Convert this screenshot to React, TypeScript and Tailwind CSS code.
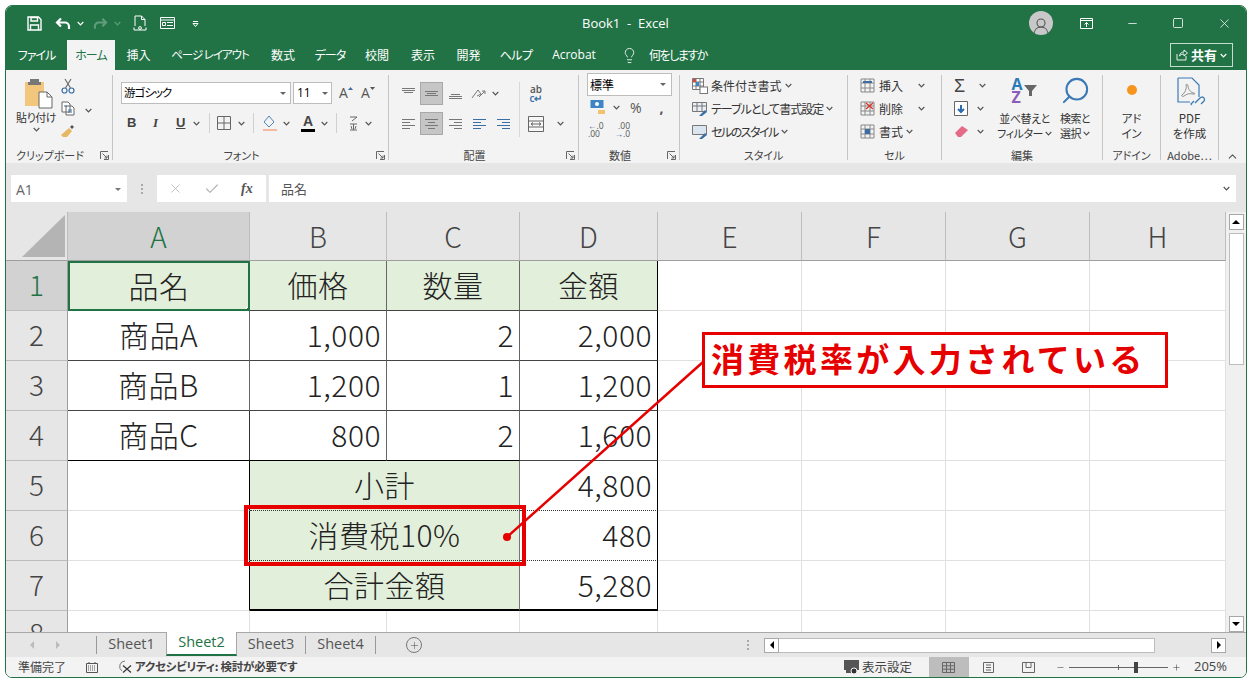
import type { ReactNode } from "react";
import { ChevronUp, Lightbulb, Search, X, Check, Minus, Plus, Square } from "lucide-react";

// small dropdown caret used all over the ribbon
function Chev({ className = "" }: { className?: string }) {
  return (
    <svg width="7" height="5" viewBox="0 0 7 5" className={`shrink-0 ${className}`}>
      <path d="M.7 1 3.5 3.8 6.3 1" fill="none" stroke="#555" strokeWidth="1.2" />
    </svg>
  );
}

function Launcher() {
  return (
    <svg width="9" height="9" viewBox="0 0 9 9" className="shrink-0">
      <path d="M.5 8V.5H8M8.5 4v4.5H4M2.5 2.5 7 7M7 4.5V7H4.5" fill="none" stroke="#666" strokeWidth="1" />
    </svg>
  );
}

function Lines({ kind, color = "#777" }: { kind: "top" | "mid" | "bot" | "left" | "center" | "right"; color?: string }) {
  const paths = {
    top: "M1 2.5h13M1 4.5h13M3 6.500h9",
    mid: "M1 5.500h13M3 7.500h9M1 9.500h13",
    bot: "M3 8.500h9M1 10.500h13M1 12.500h13",
    left: "M1 3.500h13M1 6.500h8M1 9.500h13M1 12.500h8",
    center: "M1 3.500h13M4 6.500h7M1 9.500h13M4 12.500h7",
    right: "M1 3.500h13M6 6.500h8M1 9.500h13M6 12.500h8",
  };
  return (
    <svg width="15" height="15" viewBox="0 0 15 15">
      <path d={paths[kind]} stroke={color} strokeWidth="1" fill="none" />
    </svg>
  );
}

function Group({ className, label, launcher, children }: { className: string; label: string; launcher?: boolean; children: ReactNode }) {
  return (
    <div className={`relative flex h-[85px] shrink-0 flex-col border-r border-[#c6c6c6] ${className}`}>
      <div className="h-[71px] shrink-0">{children}</div>
      <div className={`flex h-[18px] shrink-0 items-center justify-center text-[11px] text-[#444] ${launcher ? "pr-[18px]" : ""}`}>{label}</div>
      {launcher && (
        <div className="absolute right-[3px] bottom-0 flex">
          <Launcher />
        </div>
      )}
    </div>
  );
}

function TitleBar() {
  return (
    <div className="flex h-[34px] shrink-0 items-center bg-[#217346] text-white">
      <div className="flex w-[576px] shrink-0 items-center pl-[21px]">
        <svg width="15" height="15" viewBox="0 0 15 15">
          <path d="M1 1h10.5L14 3.5V14H1Z" fill="none" stroke="#fff" strokeWidth="1.4" />
          <path d="M4 1.5h6.5v3.5H4ZM3.5 14V9h8v5" fill="none" stroke="#fff" strokeWidth="1.4" />
        </svg>
        <svg width="16" height="13" viewBox="0 0 16 13" className="ml-[13px]">
          <path d="M6 1.5 2 5.5l4 4M2.5 5.5h7.5a4 4 0 0 1 4 4v2.5" fill="none" stroke="#fff" strokeWidth="2.2" />
        </svg>
        <Chev className="ml-[6px] [&_path]:stroke-white" />
        <svg width="15" height="13" viewBox="0 0 16 13" className="ml-[9px]">
          <path d="M10 1.5l4 4-4 4M13.5 5.5H6a4 4 0 0 0-4 4v2.5" fill="none" stroke="#5f9d7d" strokeWidth="2.2" />
        </svg>
        <Chev className="ml-[6px] [&_path]:stroke-[#5f9d7d]" />
        <svg width="14" height="16" viewBox="0 0 14 16" className="ml-[12px]">
          <path d="M2 11V1h6.5L12 4.5V11M8.5 1v3.5H12M1 12.5v2.5h12v-2.5" fill="none" stroke="#fff" strokeWidth="1" />
          <circle cx="7" cy="13" r="1.4" fill="none" stroke="#fff" strokeWidth="1" />
        </svg>
        <svg width="15" height="12" viewBox="0 0 15 12" className="ml-[13px]">
          <path d="M.5.5h14v11H.5ZM.5 3h14M2.5 5.5h3v3h-3ZM7 5.5h6M7 8.5h6" fill="none" stroke="#fff" strokeWidth="1" />
        </svg>
        <svg width="7" height="7" viewBox="0 0 7 7" className="ml-[17px]">
          <path d="M1 1.5h5M1 3.5h5l-2.5 3Z" fill="none" stroke="#fff" strokeWidth="1" />
        </svg>
      </div>
      <div className="pt-px text-[13px] whitespace-pre [font-family:'Open_Sans',sans-serif]">Book1  -  Excel</div>
      <div className="flex-1" />
      <div className="flex h-[24px] w-[24px] items-end justify-center overflow-hidden rounded-full bg-[#c8c8c8]">
        <svg width="16" height="18" viewBox="0 0 16 18">
          <circle cx="8" cy="6" r="4" fill="none" stroke="#555" strokeWidth="1.1" />
          <path d="M1 18c0-5 3-8 7-8s7 3 7 8" fill="none" stroke="#555" strokeWidth="1.1" />
        </svg>
      </div>
      <svg width="13" height="11" viewBox="0 0 13 11" className="ml-[27px]">
        <path d="M.5.5h12v10H.5ZM.5 2.5h12M6.5 9V4.5M4.5 6.5l2-2 2 2" fill="none" stroke="#fff" strokeWidth="1" />
      </svg>
      <Minus size={13} strokeWidth={1.4} className="ml-[33px]" />
      <Square size={12} strokeWidth={1.6} className="ml-[33px]" />
      <X size={15} strokeWidth={1.2} className="mr-[14px] ml-[33px]" />
    </div>
  );
}

function TabRow() {
  const tab = "flex h-full shrink-0 items-center justify-center";
  return (
    <div className="flex h-[30px] shrink-0 bg-[#217346] text-[12px] text-white">
      <div className={`${tab} w-[61px] tracking-[-1px]`}>ファイル</div>
      <div className={`${tab} w-[48px] bg-[#f3f3f3] tracking-[-1px] text-[#217346]`}>ホーム</div>
      <div className={`${tab} w-[47px]`}>挿入</div>
      <div className={`${tab} w-[96px] text-[11.5px] tracking-[-1px]`}>ページ レイアウト</div>
      <div className={`${tab} w-[50px]`}>数式</div>
      <div className={`${tab} w-[44px] tracking-[-1px]`}>データ</div>
      <div className={`${tab} w-[50px]`}>校閲</div>
      <div className={`${tab} w-[42px]`}>表示</div>
      <div className={`${tab} w-[49px]`}>開発</div>
      <div className={`${tab} w-[46px] tracking-[-.5px]`}>ヘルプ</div>
      <div className={`${tab} w-[70px] [font-family:'Open_Sans',sans-serif]`}>Acrobat</div>
      <div className={`${tab} w-[40px]`}>
        <Lightbulb size={17} strokeWidth={1.2} />
      </div>
      <div className={`${tab} tracking-[-1.500px]`}>何をしますか</div>
      <div className="flex-1" />
      <div className="mt-[3px] mr-[13px] flex h-[24px] w-[63px] items-center justify-center gap-[3px] border border-[#c6dccf] text-[13px] font-bold">
        <svg width="12" height="12" viewBox="0 0 12 12">
          <path d="M1 5v6h9V7M3.5 7C4 4 6 3 8 3V1l3.5 3L8 7V5C6 5 5 5.500 3.500 7Z" fill="none" stroke="#fff" strokeWidth=".9" />
        </svg>
        共有
        <Chev className="[&_path]:stroke-white" />
      </div>
    </div>
  );
}

function ClipboardGroup() {
  return (
    <Group className="w-[107px]" label="クリップボード" launcher>
      <div className="flex pt-[3px]">
        <div className="flex w-[48px] flex-col items-center pl-[12px]">
          <svg width="28" height="31" viewBox="0 0 28 31" className="ml-[6px]">
            <path d="M0 4h19v24H0Z" fill="#f2c77d" />
            <path d="M5 4V1h9v3h2v3H3V4Z" fill="#777" />
            <path d="M14 14h8l5 5v11H14Z" fill="#fff" stroke="#666" />
            <path d="M22 14v5h5" fill="none" stroke="#666" />
          </svg>
          <div className="mt-[1px] text-[11px] leading-[14px] tracking-[-.5px] whitespace-nowrap text-[#333]">貼り付け</div>
          <Chev className="mt-[3px]" />
        </div>
        <div className="ml-[6px] flex flex-col items-center gap-[7px]">
          <svg width="14" height="16" viewBox="0 0 14 16">
            <path d="M4.500 10 10 1M9.500 10 4 1" stroke="#666" strokeWidth="1.100" fill="none" />
            <circle cx="3.500" cy="12.500" r="2.500" fill="none" stroke="#3b6ea5" strokeWidth="1.200" />
            <circle cx="10.500" cy="12.500" r="2.500" fill="none" stroke="#3b6ea5" strokeWidth="1.200" />
          </svg>
          <svg width="14" height="15" viewBox="0 0 14 15">
            <path d="M1 1h6l2 2v8H1ZM5 5h6l2 2v7H5Z" fill="#fff" stroke="#666" />
            <path d="M3 5h3M7 9h4M7 11h4" stroke="#3b6ea5" />
          </svg>
          <svg width="16" height="14" viewBox="0 0 16 14">
            <path d="M1 12 9 5l3 3-5 6H3Z" fill="#e8b763" />
            <path d="M10 4l2-2 2 2-2 2Z" fill="#555" />
          </svg>
        </div>
        <Chev className="mt-[30px] ml-[9px]" />
      </div>
    </Group>
  );
}

function GrowFont({ down }: { down?: boolean }) {
  return (
    <div className="flex w-[22px] items-start justify-center text-[14px] leading-none text-[#555] [font-family:'Open_Sans',sans-serif]">
      A
      <svg width="5" height="4" viewBox="0 0 5 4" className="mt-[1px]">
        <path d={down ? "M0 0h5L2.500 3Z" : "M0 3h5L2.500 0Z"} fill={down ? "#555" : "#3b6ea5"} />
      </svg>
    </div>
  );
}

function FontGroup() {
  return (
    <Group className="w-[276px]" label="フォント" launcher>
      <div className="flex items-center pt-[7px] pl-[8px]">
        <div className="flex h-[22px] w-[170px] items-center justify-between border border-[#bdbdbd] bg-white pr-[4px] pl-[2px] text-[11.5px] tracking-[-1px]">
          游ゴシック
          <span className="h-0 w-0 border-x-[3px] border-t-[3px] border-x-transparent border-t-[#666]" />
        </div>
        <div className="ml-[2px] flex h-[22px] w-[39px] items-center justify-between border border-[#bdbdbd] bg-white px-[3px] text-[12px] [font-family:'Open_Sans',sans-serif]">
          11
          <span className="h-0 w-0 border-x-[3px] border-t-[3px] border-x-transparent border-t-[#666]" />
        </div>
        <div className="ml-[3px] flex">
          <GrowFont />
          <GrowFont down />
        </div>
      </div>
      <div className="mt-[8px] flex h-[22px] items-center pl-[14px] text-[13px] text-[#444] [font-family:'Liberation_Sans',sans-serif]">
        <div className="w-[9px] font-bold">B</div>
        <div className="ml-[17px] w-[8px] [font-family:'Liberation_Serif',serif] font-bold italic">I</div>
        <div className="ml-[15px] w-[11px] font-bold underline">U</div>
        <Chev className="ml-[6px]" />
        <div className="ml-[9px] h-[20px] w-px bg-[#d0d0d0]" />
        <svg width="14" height="14" viewBox="0 0 14 14" className="ml-[7px]">
          <path d="M.5.5h13v13H.5ZM7 .5v13M.5 7h13" fill="none" stroke="#666" />
        </svg>
        <Chev className="ml-[7px]" />
        <div className="ml-[8px] h-[20px] w-px bg-[#d0d0d0]" />
        <svg width="16" height="17" viewBox="0 0 16 17" className="ml-[8px]">
          <path d="M7 1 12 7l-5 5-5-5Z" fill="none" stroke="#4d86b8" />
          <rect x="1" y="14" width="14" height="2" fill="#f5b9a0" />
        </svg>
        <Chev className="ml-[5px]" />
        <div className="ml-[11px] flex w-[14px] flex-col items-center">
          <span className="text-[14px] leading-[13px] font-bold underline-offset-2">A</span>
          <span className="mt-[1px] h-[3px] w-[14px] bg-black" />
        </div>
        <Chev className="ml-[6px]" />
        <div className="ml-[8px] h-[20px] w-px bg-[#d0d0d0]" />
        <svg width="9" height="15" viewBox="0 0 9 15" className="ml-[12px]">
          <path d="M1 1h7L3 5M1 8h7M4.500 8v6M2 10l1 3M7 10l-1 3M1 14h7" fill="none" stroke="#666" />
        </svg>
        <Chev className="ml-[7px]" />
      </div>
    </Group>
  );
}

function AlignGroup() {
  const active = "flex h-[23px] w-[23px] items-center justify-center border border-[#a8a8a8] bg-[#c6c6c6]";
  const slot = "flex w-[24px] items-center justify-center";
  return (
    <Group className="w-[190px]" label="配置" launcher>
      <div className="pt-[7px]">
        <div className="flex h-[23px] items-center pl-[7px]">
          <div className={slot}><Lines kind="top" /></div>
          <div className={active}><Lines kind="mid" /></div>
          <div className={slot}><Lines kind="bot" /></div>
          <div className={slot}>
            <svg width="16" height="14" viewBox="0 0 16 14">
              <path d="M1 11 7 3l3 4-4 2M8 10l6-6M14 4h-3M14 4v3" fill="none" stroke="#777" />
            </svg>
          </div>
          <Chev className="ml-[1px]" />
          <div className="ml-[20px] h-[55px] w-px self-start bg-[#d8d8d8]" />
          <div className="ml-[8px] flex w-[16px] flex-col items-center text-[10px] leading-[9px] font-semibold text-[#555] [font-family:'Open_Sans',sans-serif]">
            <span>ab</span>
            <span className="text-[#3b6ea5]">c↵</span>
          </div>
        </div>
        <div className="mt-[7px] flex h-[23px] items-center pl-[7px]">
          <div className={slot}><Lines kind="left" /></div>
          <div className={active}><Lines kind="center" /></div>
          <div className={slot}><Lines kind="right" /></div>
          <div className={slot}><Lines kind="left" color="#3b6ea5" /></div>
          <div className={slot}><Lines kind="right" color="#3b6ea5" /></div>
          <svg width="16" height="16" viewBox="0 0 16 16" className="ml-[13px]">
            <path d="M.5.5h15v15H.5ZM.5 5h15M.5 11h15M3 8h10M3 8l2-1.500M3 8l2 1.500M13 8l-2-1.500M13 8l-2 1.500" fill="#f7f7f7" stroke="#666" />
          </svg>
          <Chev className="ml-[13px]" />
        </div>
      </div>
    </Group>
  );
}

function NumberGroup() {
  return (
    <Group className="w-[101px]" label="数値" launcher>
      <div className="-mt-[2px] pl-[8px]">
        <div className="flex h-[23px] w-[85px] items-center justify-between border border-[#bdbdbd] bg-white pr-[5px] pl-[2px] text-[12px]">
          標準
          <span className="h-0 w-0 border-x-[3px] border-t-[3px] border-x-transparent border-t-[#666]" />
        </div>
        <div className="flex h-[22px] items-center text-[14px] text-[#555]">
          <svg width="16" height="16" viewBox="0 0 16 16" className="ml-[3px]">
            <rect x=".5" y="1" width="13" height="8" fill="#3d86c6" />
            <circle cx="7" cy="5" r="2" fill="#fff" />
            <path d="M8 11h7v4H8Z" fill="#f1c16d" />
          </svg>
          <Chev className="ml-[7px]" />
          <span className="ml-[10px] [font-family:'Open_Sans',sans-serif]">%</span>
          <span className="ml-[18px] font-bold [font-family:'Open_Sans',sans-serif]">,</span>
        </div>
        <div className="flex h-[23px] items-center pl-[1px] text-[8.500px] leading-[8px] text-[#555] [font-family:'Open_Sans',sans-serif]">
          <div className="flex w-[14px] flex-col">
            <span><span className="text-[#3b6ea5]">←</span>.0</span>
            <span>.00</span>
          </div>
          <div className="ml-[14px] flex w-[14px] flex-col items-end">
            <span>.00</span>
            <span><span className="text-[#3b6ea5]">→</span>.0</span>
          </div>
        </div>
      </div>
    </Group>
  );
}

function StyleGroup() {
  const row = "flex h-[23px] items-center gap-[3px] text-[12px] whitespace-nowrap text-[#333]";
  return (
    <Group className="w-[168px]" label="スタイル">
      <div className="-mt-[1px] pl-[12px]">
        <div className={row}>
          <svg width="16" height="16" viewBox="0 0 16 16">
            <path d="M.5.500h11v11H.5ZM.5 4h11M.5 8h11M4 .500v11M8 .500v11" fill="#fff" stroke="#777" />
            <rect x="1" y="1" width="3" height="3" fill="#d64a3a" />
            <rect x="4" y="4" width="3" height="4" fill="#3d86c6" />
            <rect x="8" y="9" width="7.500" height="6.500" fill="#fff" stroke="#777" />
          </svg>
          条件付き書式 <Chev />
        </div>
        <div className={row}>
          <svg width="16" height="16" viewBox="0 0 16 16">
            <path d="M.5 1.500h14v9H.5ZM.5 5h14M5 1.500v9M10 1.500v9" fill="#e8eff6" stroke="#777" />
            <path d="M7 15l6-6 2 2-5 4Z" fill="#3b6ea5" />
          </svg>
          <span className="tracking-[-1px]">テーブルとして書式設定</span> <Chev />
        </div>
        <div className={row}>
          <svg width="16" height="16" viewBox="0 0 16 16">
            <path d="M.5 1.500h14v9H.5Z" fill="#dbe5ef" stroke="#777" />
            <path d="M7 15l6-6 2 2-5 4Z" fill="#3b6ea5" />
          </svg>
          <span className="tracking-[-1.500px]">セルのスタイル</span> <Chev />
        </div>
      </div>
    </Group>
  );
}

function CellsGroup() {
  const row = "flex h-[23px] items-center text-[12px] whitespace-nowrap text-[#333]";
  const grid = "M1 1h13v13H1ZM1 5h13M1 10h13M5 1v13M10 1v13";
  return (
    <Group className="w-[94px]" label="セル">
      <div className="-mt-[1px] pl-[12px]">
        <div className={row}>
          <svg width="15" height="15" viewBox="0 0 15 15">
            <path d={grid} fill="none" stroke="#888" />
            <path d="M3 4h9" stroke="#3b6ea5" strokeWidth="2" />
          </svg>
          <span className="ml-[4px] w-[39px]">挿入</span>
          <Chev />
        </div>
        <div className={row}>
          <svg width="15" height="15" viewBox="0 0 15 15">
            <path d={grid} fill="none" stroke="#888" />
            <path d="M6 2l7 6M13 2 6 8" stroke="#d83a2e" strokeWidth="1.500" />
          </svg>
          <span className="ml-[4px] w-[39px]">削除</span>
          <Chev />
        </div>
        <div className={row}>
          <svg width="15" height="15" viewBox="0 0 15 15">
            <path d={grid} fill="none" stroke="#888" />
            <rect x="5" y="5" width="5" height="5" fill="#3b6ea5" />
          </svg>
          <span className="ml-[4px] w-[27px]">書式</span>
          <Chev />
        </div>
      </div>
    </Group>
  );
}

function EditGroup() {
  const caption = "text-[11px] leading-[15px] tracking-[-.5px] whitespace-nowrap text-[#333]";
  return (
    <Group className="w-[161px]" label="編集">
      <div className="flex">
        <div className="-mt-[1px] flex w-[50px] flex-col pl-[12px]">
          <div className="flex h-[23px] items-center">
            <span className="w-[15px] text-[18px] leading-none text-[#444] [font-family:'Liberation_Sans',sans-serif]">Σ</span>
            <Chev className="ml-[10px]" />
          </div>
          <div className="flex h-[23px] items-center">
            <svg width="14" height="15" viewBox="0 0 14 15">
              <path d="M.5.500h13v14H.5Z" fill="#fff" stroke="#666" />
              <path d="M7 4v7M4 8l3 3 3-3" fill="none" stroke="#2b6cb0" strokeWidth="2" />
            </svg>
            <Chev className="ml-[9px]" />
          </div>
          <div className="flex h-[23px] items-center">
            <svg width="15" height="13" viewBox="0 0 15 13">
              <path d="M1 8 8 1l6 4-7 7H4Z" fill="#e56a86" />
            </svg>
            <Chev className="ml-[8px]" />
          </div>
        </div>
        <div className="flex w-[65px] flex-col items-center">
          <div className="flex h-[31px] items-center">
            <div className="flex flex-col text-[16px] leading-[13px] font-bold [font-family:'Open_Sans',sans-serif]">
              <span className="text-[#2b7bb9]">A</span>
              <span className="text-[#8a5cb8]">Z</span>
            </div>
            <svg width="15" height="15" viewBox="0 0 15 15">
              <path d="M1 2h13L9 8v5H6V8Z" fill="#666" />
            </svg>
          </div>
          <div className={`mt-[5px] ${caption}`}>並べ替えと</div>
          <div className={`flex items-center gap-[2px] ${caption}`}>フィルター <Chev /></div>
        </div>
        <div className="flex w-[36px] flex-col items-center">
          <Search size={31} strokeWidth={1.6} color="#3b7ab5" className="-scale-x-100" />
          <div className={`mt-[5px] ${caption}`}>検索と</div>
          <div className={`flex items-center gap-[2px] ${caption}`}>選択 <Chev /></div>
        </div>
      </div>
    </Group>
  );
}

function AddinGroups() {
  const caption = "text-center text-[11.500px] leading-[15px] text-[#333]";
  return (
    <>
      <Group className="w-[58px]" label="アドイン">
        <div className="flex flex-col items-center pt-[10px]">
          <span className="h-[10px] w-[10px] rounded-full bg-[#f7941d]" />
          <div className={`mt-[16px] ${caption}`}>アド<br />イン</div>
        </div>
      </Group>
      <Group className="w-[58px]" label="Adobe⋯">
        <div className="flex flex-col items-center pt-[2px]">
          <svg width="32" height="30" viewBox="0 0 32 30" className="ml-[2px]">
            <path d="M3 1h14l7 7v12M3 1v24h12" fill="none" stroke="#3b7ab5" strokeWidth="1.200" />
            <path d="M7 18c3-2 5-7 4-10 0-1 2-1 2 1 0 3 3 7 6 7 1 0 1 2-1 1-4-1-6 0-9 2-1 1-3 0-2-1Z" fill="none" stroke="#777" strokeWidth=".8" />
            <path d="M20 26l5-5a2.500 2.500 0 0 1 4 3l-3 3M17 28l-1-1 3-3" fill="none" stroke="#3b7ab5" strokeWidth="1.300" />
          </svg>
          <div className={`mt-[4px] ${caption}`}>PDF<br />を作成</div>
        </div>
      </Group>
      <div className="flex h-[88px] flex-1 items-end justify-center">
        <ChevronUp size={13} color="#555" />
      </div>
    </>
  );
}

function Ribbon() {
  return (
    <div className="flex h-[93px] shrink-0 items-start bg-[#f3f3f3] pt-[5px]">
      <ClipboardGroup />
      <FontGroup />
      <AlignGroup />
      <NumberGroup />
      <StyleGroup />
      <CellsGroup />
      <EditGroup />
      <AddinGroups />
    </div>
  );
}

function FormulaBar() {
  return (
    <div className="flex h-[49px] shrink-0 items-start bg-[#e6e6e6] pt-[12px] pl-[5px] text-[#666]">
      <div className="flex h-[27px] w-[116px] items-center justify-between bg-white pt-px pr-[6px] pl-[5px] text-[14px] [font-family:'Open_Sans',sans-serif]">
        A1
        <span className="h-0 w-0 border-x-[3px] border-t-[3px] border-x-transparent border-t-[#777]" />
      </div>
      <div className="flex h-[27px] w-[30px] flex-col items-center justify-center gap-[2px]">
        <span className="h-[2px] w-[2px] bg-[#aaa]" />
        <span className="h-[2px] w-[2px] bg-[#aaa]" />
        <span className="h-[2px] w-[2px] bg-[#aaa]" />
      </div>
      <div className="flex h-[27px] w-[109px] items-center bg-white pl-[11px]">
        <X size={15} strokeWidth={1.300} color="#b4b4b4" />
        <Check size={16} strokeWidth={1.800} color="#b4b4b4" className="ml-[21px]" />
        <span className="ml-[21px] text-[14px] font-bold text-[#555] italic [font-family:'Liberation_Serif',serif]">fx</span>
      </div>
      <div className="ml-[3px] flex h-[27px] w-[967px] items-center justify-between bg-white pr-[6px] pl-[12px] text-[13px] text-[#555]">
        品名
        <Chev />
      </div>
    </div>
  );
}

const grey = "border-r border-b border-[#e0e0e0]";
const line = "flex items-center justify-center overflow-hidden pb-[3px] text-[30px] leading-none font-light tracking-[.5px] text-[#222]";
const num = "flex items-center justify-end pr-[5px] pb-[3px] text-[30px] leading-none font-light tracking-[.5px] text-[#222]";

function Head({ children, on }: { children: ReactNode; on?: boolean }) {
  return (
    <div
      className={`flex items-center justify-center border-r border-b border-r-[#bdbdbd] border-b-[#9e9e9e] text-[28px] leading-none font-light ${
        on ? "bg-[#d2d2d2] text-[#217346]" : "bg-[#e6e6e6] text-[#444]"
      }`}
    >
      {children}
    </div>
  );
}

function RowHead({ children, on }: { children: ReactNode; on?: boolean }) {
  return (
    <div
      className={`flex items-center justify-center border-r border-b border-r-[#9e9e9e] border-b-[#bdbdbd] pb-[3px] text-[28px] leading-none font-light ${
        on ? "bg-[#d2d2d2] text-[#217346]" : "bg-[#e6e6e6] text-[#444]"
      }`}
    >
      {children}
    </div>
  );
}

function Blank({ n }: { n: number }) {
  return (
    <>
      {Array.from({ length: n }, (_, i) => (
        <div key={i} className={grey} />
      ))}
    </>
  );
}

function Sheet() {
  const black = "border-r border-b border-r-[#666] border-b-[#444]";
  const fill = "bg-[#e2efda]";
  return (
    <div className="grid h-full w-[1220px] shrink-0 grid-cols-[62px_182px_137px_133px_138px_144px_144px_144px_136px] grid-rows-[49px_repeat(7,50px)_21px] overflow-hidden [font-feature-settings:normal]">
      <div className="flex items-end justify-end border-r border-b border-r-[#bdbdbd] border-b-[#9e9e9e] bg-[#e6e6e6] pr-[2px] pb-[3px]">
        <div className="h-0 w-0 border-b-[42px] border-l-[43px] border-b-[#b4b4b4] border-l-transparent" />
      </div>
      <Head on>A</Head>
      <Head>B</Head>
      <Head>C</Head>
      <Head>D</Head>
      <Head>E</Head>
      <Head>F</Head>
      <Head>G</Head>
      <Head>H</Head>

      <RowHead on>1</RowHead>
      <div className={`relative ${line} border-2 border-[#217346] ${fill}`}>
        品名
        <span className="absolute -right-[3px] -bottom-[3px] h-[5px] w-[5px] border border-white bg-[#217346]" />
      </div>
      <div className={`${line} ${black} ${fill}`}>価格</div>
      <div className={`${line} ${black} ${fill}`}>数量</div>
      <div className={`${line} border-r border-b border-r-black border-b-[#444] ${fill}`}>金額</div>
      <Blank n={4} />

      <RowHead>2</RowHead>
      <div className={`${line} ${black} border-r-[#333]`}>商品A</div>
      <div className={`${num} ${black}`}>1,000</div>
      <div className={`${num} ${black}`}>2</div>
      <div className={`${num} border-r border-b border-r-black border-b-[#444]`}>2,000</div>
      <Blank n={4} />

      <RowHead>3</RowHead>
      <div className={`${line} ${black} border-r-[#333]`}>商品B</div>
      <div className={`${num} ${black}`}>1,200</div>
      <div className={`${num} ${black}`}>1</div>
      <div className={`${num} border-r border-b border-r-black border-b-[#444]`}>1,200</div>
      <Blank n={4} />

      <RowHead>4</RowHead>
      <div className={`${line} border-r border-b border-r-[#333] border-b-black`}>商品C</div>
      <div className={`${num} border-r border-b border-r-[#666] border-b-black`}>800</div>
      <div className={`${num} border-r border-b border-r-[#666] border-b-black`}>2</div>
      <div className={`${num} border-r border-b border-r-black border-b-[#444]`}>1,600</div>
      <Blank n={4} />

      <RowHead>5</RowHead>
      <div className="border-r border-b border-r-black border-b-[#e0e0e0]" />
      <div className={`col-span-2 ${line} border-r border-b border-dotted border-r-[#777] border-b-[#333] [border-right-style:solid] ${fill}`}>小計</div>
      <div className={`${num} border-r border-b border-dotted border-r-black border-b-[#333] [border-right-style:solid]`}>4,800</div>
      <Blank n={4} />

      <RowHead>6</RowHead>
      <div className="border-r border-b border-r-black border-b-[#e0e0e0]" />
      <div className={`col-span-2 ${line} border-r border-b border-dotted border-r-[#777] border-b-[#333] [border-right-style:solid] ${fill}`}>消費税10%</div>
      <div className={`${num} border-r border-b border-dotted border-r-black border-b-[#333] [border-right-style:solid]`}>480</div>
      <Blank n={4} />

      <RowHead>7</RowHead>
      <div className="border-r border-b border-r-black border-b-[#e0e0e0]" />
      <div className={`col-span-2 ${line} border-r border-b-2 border-r-[#777] border-b-black ${fill}`}>合計金額</div>
      <div className={`${num} border-r border-b-2 border-black`}>5,280</div>
      <Blank n={4} />

      <div className="flex items-start justify-center overflow-hidden border-r border-r-[#9e9e9e] bg-[#e6e6e6] pt-[7px] text-[28px] leading-none font-light text-[#444]">8</div>
      {Array.from({ length: 8 }, (_, i) => (
        <div key={i} className="border-r border-[#e0e0e0]" />
      ))}
    </div>
  );
}

function VScroll() {
  return (
    <div className="flex flex-1 flex-col items-center bg-[#f0f0f0] pt-[2px]">
      <div className="flex h-[16px] w-[15px] shrink-0 items-center justify-center border border-[#a8a8a8] bg-white">
        <span className="h-0 w-0 border-x-[4px] border-b-[4px] border-x-transparent border-b-black" />
      </div>
      <div className="mt-[3px] h-[132px] w-[15px] shrink-0 border border-[#bdbdbd] bg-white" />
      <div className="flex-1" />
      <div className="flex h-[16px] w-[15px] shrink-0 items-center justify-center border border-[#a8a8a8] bg-white">
        <span className="h-0 w-0 border-x-[4px] border-t-[4px] border-x-transparent border-t-black" />
      </div>
    </div>
  );
}

function SheetTabs() {
  const tab = "flex h-full items-center justify-center pb-[2px] text-[14.500px] text-[#555] [font-family:'Open_Sans',sans-serif]";
  return (
    <div className="flex h-[25px] shrink-0 items-stretch border-t border-[#a8a8a8] bg-[#e6e6e6]">
      <div className="flex w-[90px] shrink-0 items-center pl-[24px] text-[#b0b0b0]">
        <span className="h-0 w-0 border-y-[4px] border-r-[4px] border-y-transparent border-r-[#bbb]" />
        <span className="ml-[22px] h-0 w-0 border-y-[4px] border-l-[4px] border-y-transparent border-l-[#bbb]" />
      </div>
      <div className="mt-[3px] h-[18px] w-px bg-[#999]" />
      <div className={`${tab} w-[69px]`}>Sheet1</div>
      <div className={`${tab} -mt-px h-[25px] w-[71px] border-x border-b-2 border-x-[#a8a8a8] border-b-[#217346] bg-white text-[#217346]`}>Sheet2</div>
      <div className={`${tab} w-[68px]`}>Sheet3</div>
      <div className="mt-[3px] h-[18px] w-px bg-[#999]" />
      <div className={`${tab} w-[69px]`}>Sheet4</div>
      <div className="mt-[3px] h-[18px] w-px bg-[#999]" />
      <div className="flex w-[79px] items-center pl-[30px]">
        <div className="flex h-[16px] w-[16px] items-center justify-center rounded-full border border-[#777] text-[#555]">
          <Plus size={11} strokeWidth={1.200} />
        </div>
      </div>
      <div className="flex w-[294px] items-center justify-end">
        <div className="flex flex-col gap-[2px]">
          <span className="h-[2px] w-[2px] bg-[#aaa]" />
          <span className="h-[2px] w-[2px] bg-[#aaa]" />
          <span className="h-[2px] w-[2px] bg-[#aaa]" />
        </div>
      </div>
      <div className="ml-[15px] flex items-center">
        <div className="flex h-[15px] w-[15px] items-center justify-center border border-[#a8a8a8] bg-white">
          <span className="h-0 w-0 border-y-[4px] border-r-[4px] border-y-transparent border-r-black" />
        </div>
        <div className="h-[15px] w-[376px] border-y border-r border-[#bdbdbd] bg-white" />
        <div className="ml-[56px] flex h-[15px] w-[15px] items-center justify-center border border-[#a8a8a8] bg-white">
          <span className="h-0 w-0 border-y-[4px] border-l-[4px] border-y-transparent border-l-black" />
        </div>
      </div>
    </div>
  );
}

function StatusBar() {
  return (
    <div className="flex h-[20px] shrink-0 items-center bg-[#f3f3f3] text-[12px] text-[#444]">
      <span className="ml-[12px] w-[48px]">準備完了</span>
      <svg width="12" height="12" viewBox="0 0 12 12" className="ml-[20px]">
        <path d="M.5 2.500h11v9H.5ZM3 1v2M9 1v2" fill="none" stroke="#555" />
        <path d="M2 5h8M2 7h8M2 9h8" stroke="#555" strokeDasharray="1 1" />
      </svg>
      <svg width="15" height="14" viewBox="0 0 15 14" className="ml-[20px]">
        <path d="M7 1a5.500 5.500 0 0 0-3 10" fill="none" stroke="#777" />
        <path d="M5 5.500l8 7M13 5.500l-8 7" stroke="#333" strokeWidth="1.200" />
      </svg>
      <span className="ml-[2px] text-[11.500px] font-bold tracking-[-.25px]">アクセシビリティ: 検討が必要です</span>
      <div className="flex-1" />
      <svg width="16" height="15" viewBox="0 0 16 15">
        <path d="M0 0h15v10H8v3H2v-3H0Z" fill="#555" />
        <circle cx="10" cy="11" r="3" fill="#333" stroke="#f3f3f3" />
      </svg>
      <span className="ml-[2px] w-[67px] text-[12.500px]">表示設定</span>
      <div className="flex h-full w-[40px] items-center justify-center bg-[#bdbdbd]">
        <svg width="13" height="11" viewBox="0 0 13 11">
          <path d="M.5.500h12v10H.5ZM.5 3.800h12M.5 7.200h12M4.500.500v10M8.500.500v10" fill="none" stroke="#666" />
        </svg>
      </div>
      <div className="flex h-full w-[40px] items-center justify-center">
        <svg width="11" height="11" viewBox="0 0 11 11">
          <path d="M.5.500h10v10H.5ZM3 3h5M3 5.500h5M3 8h5" fill="none" stroke="#666" />
        </svg>
      </div>
      <div className="flex h-full w-[40px] items-center justify-center">
        <svg width="13" height="11" viewBox="0 0 13 11">
          <path d="M.5.500h12v10H.5ZM4 .500v5h5v-5" fill="none" stroke="#666" />
        </svg>
      </div>
      <Minus size={9} strokeWidth={1.500} className="ml-[7px]" />
      <div className="relative ml-[4px] flex h-[12px] w-[99px] items-center">
        <span className="h-px w-full bg-[#666]" />
        <span className="absolute left-[49px] h-[5px] w-px bg-[#666]" />
        <span className="absolute left-[65px] h-[11px] w-[4px] bg-[#444]" />
      </div>
      <Plus size={9} strokeWidth={1.500} className="ml-[4px]" />
      <span className="mr-[19px] ml-[13px] text-[13px] [font-family:'Open_Sans',sans-serif]">205%</span>
    </div>
  );
}

export default function App() {
  return (
    <div className="relative h-[685px] w-[1252px] overflow-hidden bg-white pt-[5px] pl-[5px] [font-family:'Noto_Sans_CJK_JP',sans-serif] [font-feature-settings:'palt']">
      <div className="flex h-[673px] w-[1242px] flex-col overflow-hidden rounded-[7px] border border-[#217346]">
        <TitleBar />
        <TabRow />
        <Ribbon />
        <FormulaBar />
        <div className="flex h-[420px] shrink-0">
          <Sheet />
          <VScroll />
        </div>
        <SheetTabs />
        <StatusBar />
      </div>

      {/* annotation drawn over the sheet */}
      <div className="absolute top-[505px] left-[244px] h-[61px] w-[282px] border-[4px] border-[#e60000]" />
      <svg className="absolute top-0 left-0" width="1252" height="685" viewBox="0 0 1252 685">
        <path d="M703 362 507 537" stroke="#e60000" strokeWidth="2.500" />
        <circle cx="507" cy="537" r="4" fill="#e60000" />
      </svg>
      <div className="absolute top-[332px] left-[702px] flex h-[56px] w-[466px] items-center border-[3px] border-[#e60000] bg-white pb-[3px] pl-[6px] text-[33px] leading-none font-bold tracking-[3.300px] text-[#e60000] [font-feature-settings:normal]">
        消費税率が入力されている
      </div>
    </div>
  );
}
